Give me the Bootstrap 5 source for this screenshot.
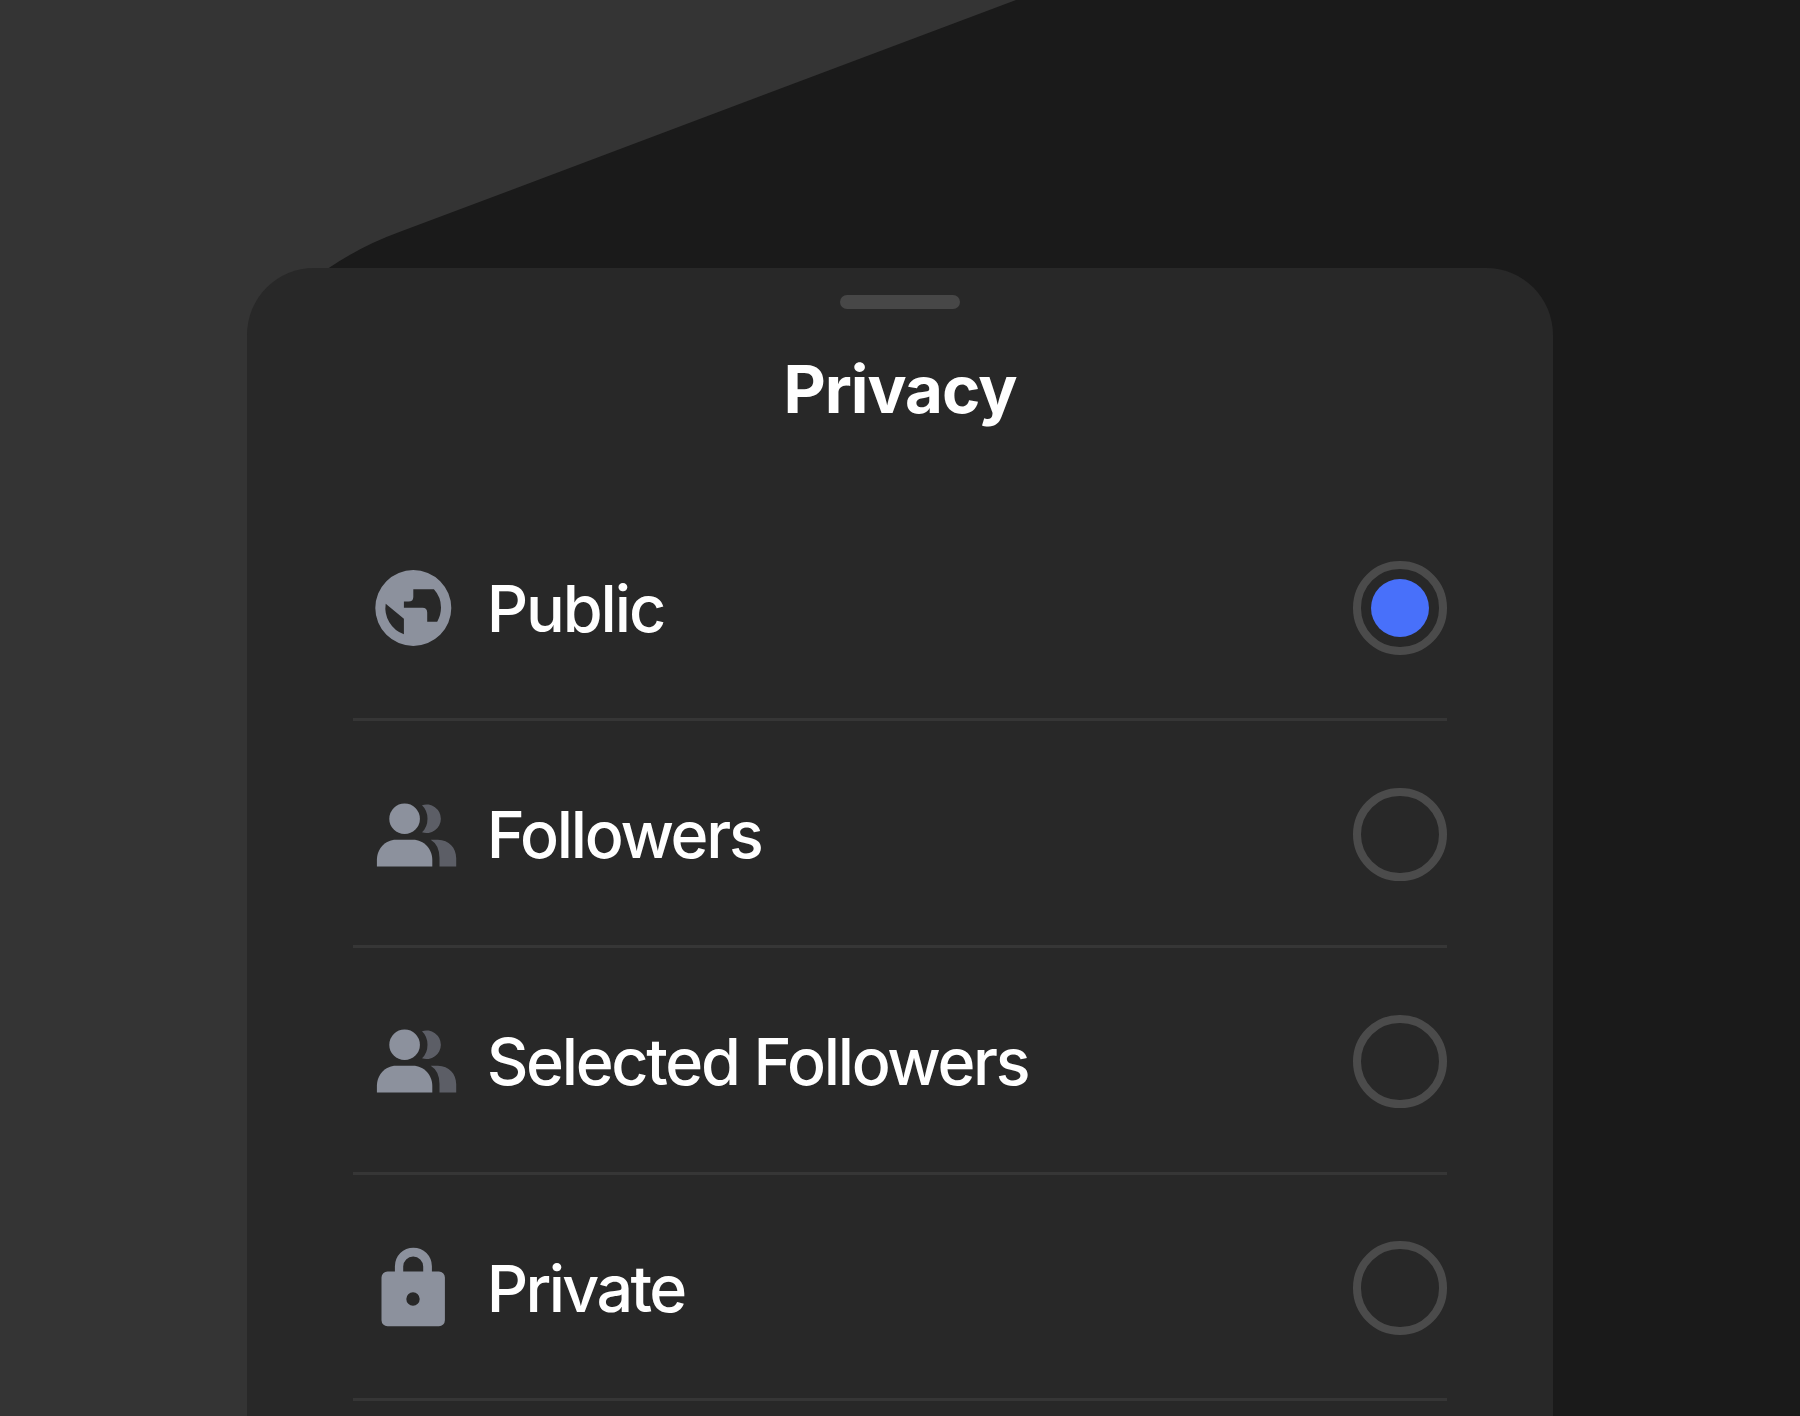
<!DOCTYPE html>
<html lang="en">
<head>
<meta charset="utf-8">
<meta name="viewport" content="width=device-width, initial-scale=1">
<title>Privacy</title>
<link href="https://cdn.jsdelivr.net/npm/bootstrap@5.3.0/dist/css/bootstrap.min.css" rel="stylesheet">
<style>
  body { background: #343434; font-family: Inter, "Liberation Sans", sans-serif; }
  .stage { width: 1800px; height: 1416px; padding: 268px 246.67px 0; }
  .backdrop { inset: 0; width: 1800px; height: 1416px; }
  .sheet { background: #282828; border-radius: 67px 67px 0 0; padding: 27px 106.67px 0; }
  .grabber { width: 120px; height: 14px; background: #474747; }
  .sheet-title { font-size: 65.3px; line-height: 80px; font-weight: 700; letter-spacing: -1px; margin: 41px 0 64.6px; }
  .option { height: 226.67px; padding: 3px 0 0 20px; border-bottom: 3px solid #363636; }
  .option-icon { width: 80px; height: 80px; margin-right: 33.33px; color: #8c919d; overflow: visible; }
  .option-label { font-size: 64.6px; line-height: 80px; font-weight: 500; letter-spacing: -2.3px; padding-top: 1.4px; }
  .label-public { letter-spacing: -2.1px; }
  .label-private { letter-spacing: -2.6px; }
  .radio-ring { width: 93.33px; height: 93.33px; border: 8px solid #4b4b4b; }
  .radio-dot { width: 58.33px; height: 58.33px; background: #4870fa; }
</style>
</head>
<body>
<svg class="d-none" aria-hidden="true">
  <symbol id="people" viewBox="0 0 80 80" overflow="visible">
    <circle cx="31.6" cy="23.7" r="15.3"/>
    <path d="M3.900 71.500V65C3.900 54 12 44.700 23 44.700H40C51 44.700 59.300 54 59.300 65V71.500Z"/>
    <path fill="#5c5e66" d="M49 10.200A14.300 14.300 0 1 1 49 37.300Q54.500 32 54.500 23.700T49 10.200ZM57.700 44.700H65C76 44.700 83.200 53 83.200 63V71.500H66.500V63Q66.500 50 57.700 44.700Z"/>
  </symbol>
</svg>
<main class="stage position-relative overflow-hidden">
  <svg class="backdrop position-absolute" viewBox="0 0 1800 1416" aria-hidden="true">
    <path fill="#1a1a1a" d="M1016 0H1800V1416H1400L300 290L328 268.500Q361.500 245.700 400 231.800Z"/>
  </svg>
  <section class="sheet position-relative h-100 d-flex flex-column">
    <div class="grabber rounded-pill mx-auto flex-shrink-0"></div>
    <h1 class="sheet-title text-center text-white">Privacy</h1>
    <div class="option d-flex align-items-center flex-shrink-0">
      <svg class="option-icon flex-shrink-0" viewBox="0 0 80 80" fill="currentColor" fill-rule="evenodd"><path d="M40.300 2A38 38 0 1 1 40.300 78A38 38 0 1 1 40.300 2ZM12.700 35.700L30.900 50.700V66.300A28 28 0 0 1 12.700 35.700ZM30.900 33.500H35.500Q40.300 33.500 40.300 29V21.300H60.900Q68 29 68 39.500Q68 47 64.200 53.700H54.200V44.500Q54.200 39.700 49.500 39.700H30.900Z"/></svg>
      <span class="option-label label-public text-white">Public</span>
      <span class="radio-ring rounded-circle ms-auto d-flex align-items-center justify-content-center"><span class="radio-dot rounded-circle"></span></span>
    </div>
    <div class="option d-flex align-items-center flex-shrink-0">
      <svg class="option-icon flex-shrink-0" viewBox="0 0 80 80" fill="currentColor"><use href="#people" width="80" height="80"/></svg>
      <span class="option-label text-white">Followers</span>
      <span class="radio-ring rounded-circle ms-auto"></span>
    </div>
    <div class="option d-flex align-items-center flex-shrink-0">
      <svg class="option-icon flex-shrink-0" viewBox="0 0 80 80" fill="currentColor"><use href="#people" width="80" height="80"/></svg>
      <span class="option-label text-white">Selected Followers</span>
      <span class="radio-ring rounded-circle ms-auto"></span>
    </div>
    <div class="option d-flex align-items-center flex-shrink-0">
      <svg class="option-icon flex-shrink-0" viewBox="0 0 80 80" fill="currentColor" fill-rule="evenodd"><path d="M14.500 23.500H21.900V18.200A18.500 18.500 0 0 1 58.900 18.200V23.500H65.900A6 6 0 0 1 71.900 29.500V72.300A6 6 0 0 1 65.900 78.300H14.500A6 6 0 0 1 8.500 72.300V29.500A6 6 0 0 1 14.500 23.500ZM30.200 23.500H50.200V18.500A10 10 0 0 0 30.200 18.500ZM40 44.300A6.700 6.700 0 1 0 40 57.700A6.700 6.700 0 1 0 40 44.300Z"/></svg>
      <span class="option-label label-private text-white">Private</span>
      <span class="radio-ring rounded-circle ms-auto"></span>
    </div>
  </section>
</main>
<script src="https://cdn.jsdelivr.net/npm/bootstrap@5.3.0/dist/js/bootstrap.bundle.min.js"></script>
</body>
</html>
